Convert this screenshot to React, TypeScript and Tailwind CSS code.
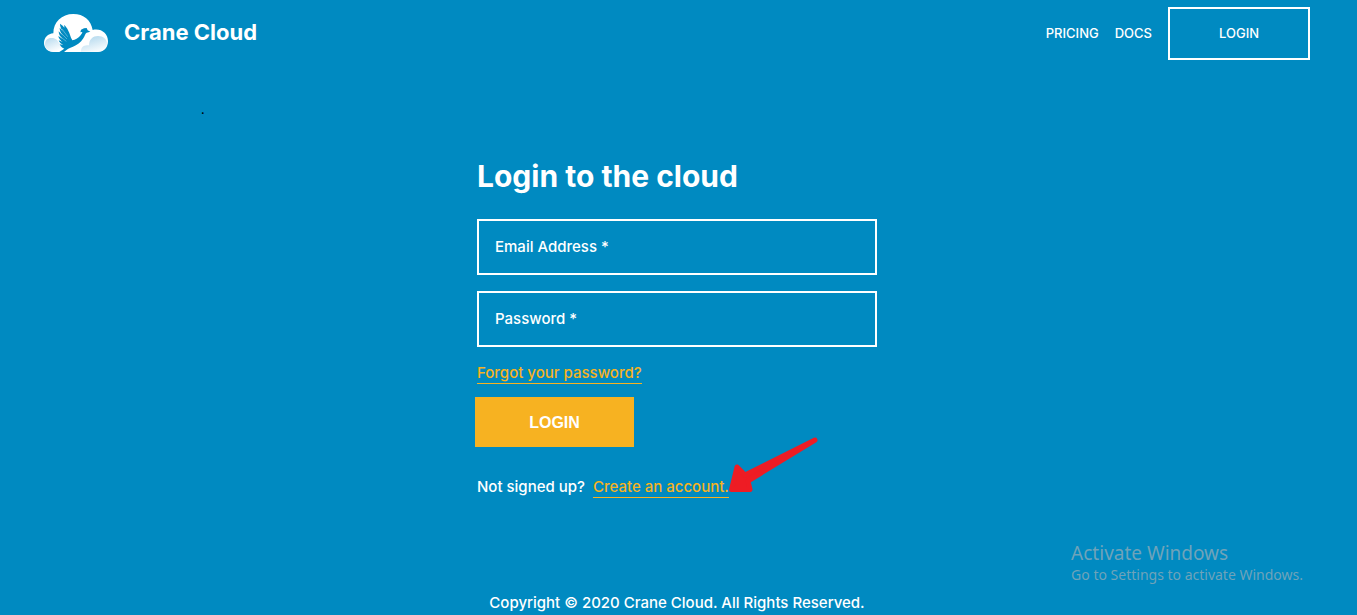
import React from "react";

function CraneLogo() {
  return (
    <svg width="64" height="38" viewBox="0 0 192 114" aria-hidden="true">
      <defs>
        <linearGradient id="leftPuff" x1="0" y1="0" x2="0.6" y2="1">
          <stop offset="0" stopColor="#b4d9ee" />
          <stop offset="1" stopColor="#ffffff" />
        </linearGradient>
        <linearGradient id="rightPuff" x1="0" y1="0" x2="0.5" y2="1">
          <stop offset="0" stopColor="#a9d3eb" />
          <stop offset="1" stopColor="#f4fafd" />
        </linearGradient>
      </defs>
      <path
        fill="#ffffff"
        d="M28 114C12 114 0 102 0 87C0 71 12 59 28 58C28 24 53 0 88 0C119 0 141 18 146 48C171 42 192 58 192 82C192 101 179 114 161 114Z"
      />
      <path
        fill="url(#leftPuff)"
        d="M3 92C2 78 12 71 24 72C35 72 42 79 45 88C54 87 60 94 60 102L47 113H28C14 113 4 104 3 92Z"
      />
      <path
        fill="url(#rightPuff)"
        d="M111 113C110 100 120 91 135 94C135 76 147 66 162 66C178 66 189 76 189 88C189 102 177 113 162 113Z"
      />
      <path
        fill="#008ac1"
        d="M48 29L56 35L61 41L61 32L70 44L76 57L81 71L85 79C94 77 102 73 108 66C113 60 117 55 114 54L109 55L111 47L120 43L128 42L131 49L139 53L128 56C124 58 123 65 118 73C110 86 99 94 87 98C76 101 69 106 60 114H46L61 104C55 102 50 98 47 91L58 93C51 90 46 86 44 79L56 84C49 79 44 74 43 66L55 74C48 67 44 61 44 52L57 65C50 56 47 50 47 41L60 56C52 46 48 39 48 29Z"
      />
      <path
        d="M54 45L71 68M51 57L69 75M51 70L67 82"
        stroke="#ffffff"
        strokeOpacity="0.5"
        strokeWidth="2"
        fill="none"
      />
    </svg>
  );
}

function Field({ id, label, type }: { id: string; label: string; type: string }) {
  return (
    <div className="relative">
      <input
        id={id}
        type={type}
        placeholder=" "
        className="peer block h-14 w-full border-2 border-white bg-transparent px-4 text-white outline-none"
      />
      <label
        htmlFor={id}
        className="pointer-events-none absolute inset-y-0 left-[18px] flex items-center peer-[:not(:placeholder-shown)]:hidden"
      >
        {label} *
      </label>
    </div>
  );
}

export default function App() {
  return (
    <div className="flex min-h-screen flex-col bg-[#008ac1] font-['Inter',sans-serif] text-[15px] leading-5 font-medium text-white">
      <header className="flex items-start justify-between pt-[7px] pr-[47px] pl-11">
        <a href="#home" className="flex items-start gap-4 pt-[7px]">
          <CraneLogo />
          <span className="text-[22px] leading-9 font-bold">Crane Cloud</span>
        </a>
        <nav className="flex items-center gap-4 text-[13px]">
          <a href="#pricing" className="pb-0.5">
            PRICING
          </a>
          <a href="#docs" className="pb-0.5">
            DOCS
          </a>
          <a
            href="#login"
            className="flex h-[53px] w-[142px] items-center justify-center border-2 border-white pb-0.5"
          >
            LOGIN
          </a>
        </nav>
      </header>

      <main className="flex flex-1 flex-col pt-10">
        <p className="pl-[201px] text-xs leading-5 text-black">.</p>
        <form className="mx-auto w-full max-w-[403px] pt-9 pr-[3px]" onSubmit={(e) => e.preventDefault()}>
          <h1 className="text-[30px] leading-10 font-bold">Login to the cloud</h1>
          <div className="mt-[23px] flex flex-col gap-4">
            <Field id="email" label="Email Address" type="email" />
            <Field id="password" label="Password" type="password" />
          </div>
          <div className="mt-4 flex">
            <a href="#forgot" className="border-b border-[#f7b221] text-[#f7b221]">
              Forgot your password?
            </a>
          </div>
          <button
            type="submit"
            className="mt-[13px] -ml-0.5 block h-[50px] w-[159px] bg-[#f7b221] pt-0.5 font-['Liberation_Sans',sans-serif] text-base font-bold"
          >
            LOGIN
          </button>
          <div className="mt-[30px] flex gap-2">
            <span>Not signed up?</span>
            <span className="relative">
              <a href="#register" className="block border-b border-[#f7b221] text-[#f7b221]">
                Create an account.
              </a>
              <svg
                className="absolute bottom-1 left-full"
                width="90"
                height="58"
                viewBox="0 0 90 58"
                aria-hidden="true"
              >
                <path
                  d="M86 4L19 45L21 53.5L2.5 53.5L8 31L16 39Z"
                  fill="#ee1c24"
                  stroke="#ee1c24"
                  strokeWidth="5"
                  strokeLinejoin="round"
                />
              </svg>
            </span>
          </div>
        </form>
      </main>

      <aside className="mr-[54px] self-end font-['Noto_Sans',sans-serif] font-normal text-[#6fa3b9]">
        <p className="text-[19px] leading-6">Activate Windows</p>
        <p className="text-sm leading-5">Go to Settings to activate Windows.</p>
      </aside>
      <footer className="pt-2 pr-[3px] pb-0.5 text-center">
        Copyright © 2020 Crane Cloud. All Rights Reserved.
      </footer>
    </div>
  );
}
